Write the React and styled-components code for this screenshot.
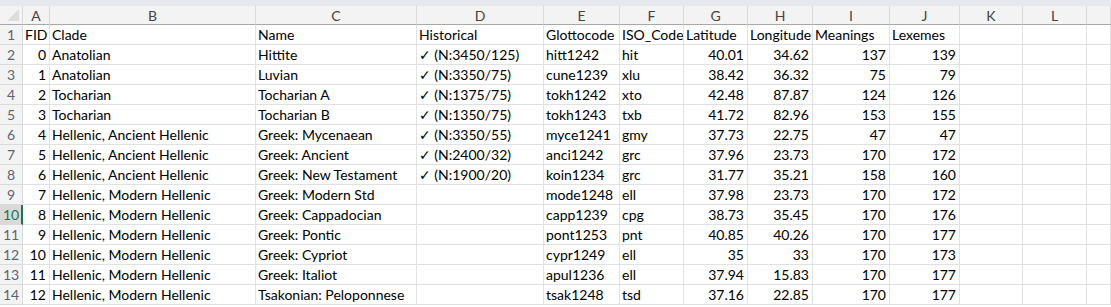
import React from 'react'
import styled, { createGlobalStyle } from 'styled-components'

const GlobalStyle = createGlobalStyle`
  body {
    margin: 0;
    background: #fff;
    font-family: Lato, "Liberation Sans", "DejaVu Sans", sans-serif;
  }
`

const widths = [23, 27, 206, 161, 127, 76, 64, 64, 65, 77, 70, 63, 64]
const letters = ['A', 'B', 'C', 'D', 'E', 'F', 'G', 'H', 'I', 'J', 'K', 'L', '']
// numeric columns are right aligned
const numeric = [true, false, false, false, false, false, true, true, true, true, false, false, false]

const header = ['FID', 'Clade', 'Name', 'Historical', 'Glottocode', 'ISO_Code', 'Latitude', 'Longitude', 'Meanings', 'Lexemes']

const rows = [
  ['0', 'Anatolian', 'Hittite', '✓ (N:3450/125)', 'hitt1242', 'hit', '40.01', '34.62', '137', '139'],
  ['1', 'Anatolian', 'Luvian', '✓ (N:3350/75)', 'cune1239', 'xlu', '38.42', '36.32', '75', '79'],
  ['2', 'Tocharian', 'Tocharian A', '✓ (N:1375/75)', 'tokh1242', 'xto', '42.48', '87.87', '124', '126'],
  ['3', 'Tocharian', 'Tocharian B', '✓ (N:1350/75)', 'tokh1243', 'txb', '41.72', '82.96', '153', '155'],
  ['4', 'Hellenic, Ancient Hellenic', 'Greek: Mycenaean', '✓ (N:3350/55)', 'myce1241', 'gmy', '37.73', '22.75', '47', '47'],
  ['5', 'Hellenic, Ancient Hellenic', 'Greek: Ancient', '✓ (N:2400/32)', 'anci1242', 'grc', '37.96', '23.73', '170', '172'],
  ['6', 'Hellenic, Ancient Hellenic', 'Greek: New Testament', '✓ (N:1900/20)', 'koin1234', 'grc', '31.77', '35.21', '158', '160'],
  ['7', 'Hellenic, Modern Hellenic', 'Greek: Modern Std', '', 'mode1248', 'ell', '37.98', '23.73', '170', '172'],
  ['8', 'Hellenic, Modern Hellenic', 'Greek: Cappadocian', '', 'capp1239', 'cpg', '38.73', '35.45', '170', '176'],
  ['9', 'Hellenic, Modern Hellenic', 'Greek: Pontic', '', 'pont1253', 'pnt', '40.85', '40.26', '170', '177'],
  ['10', 'Hellenic, Modern Hellenic', 'Greek: Cypriot', '', 'cypr1249', 'ell', '35', '33', '170', '173'],
  ['11', 'Hellenic, Modern Hellenic', 'Greek: Italiot', '', 'apul1236', 'ell', '37.94', '15.83', '170', '177'],
  ['12', 'Hellenic, Modern Hellenic', 'Tsakonian: Peloponnese', '', 'tsak1248', 'tsd', '37.16', '22.85', '170', '177'],
]

export default function App() {
  const selectedRow = 10
  return (
    <>
      <GlobalStyle />
      <Sheet>
        <TopStrip />
        <Grid>
          <Corner>
            <CornerTriangle />
          </Corner>
          {letters.map((l, i) => (
            <ColHead key={'h' + i}>{l}</ColHead>
          ))}

          <RowHead>1</RowHead>
          {letters.map((_, i) => (
            <Cell key={'r1' + i}>{header[i] || ''}</Cell>
          ))}

          {rows.map((r, ri) => {
            const n = ri + 2
            return (
              <React.Fragment key={n}>
                <RowHead $selected={n === selectedRow}>{n}</RowHead>
                {letters.map((_, i) => (
                  <Cell key={i} $right={numeric[i]}>
                    {r[i] || ''}
                  </Cell>
                ))}
              </React.Fragment>
            )
          })}
        </Grid>
      </Sheet>
    </>
  )
}

const Sheet = styled.div`
  width: 1111px;
  height: 307px;
  overflow: hidden;
  background: #fff;
`

const TopStrip = styled.div`
  height: 6px;
  background: #e6e8eb;
`

const Grid = styled.div`
  display: grid;
  grid-template-columns: ${widths.map(w => w + 'px').join(' ')} 1fr;
  grid-template-rows: 19px;
  grid-auto-rows: 20px;
`

const Corner = styled.div`
  position: relative;
  background: #f3f3f3;
  border-right: 1px solid #dadada;
  border-bottom: 1px solid #a8a8a8;
`

const CornerTriangle = styled.div`
  position: absolute;
  right: 3px;
  bottom: 3px;
  width: 0;
  height: 0;
  border-left: 12px solid transparent;
  border-bottom: 12px solid #dcdcdc;
`

const ColHead = styled.div`
  background: #f3f3f3;
  border-right: 1px solid #dadada;
  border-bottom: 1px solid #a8a8a8;
  color: #444;
  font-size: 14px;
  line-height: 19px;
  text-align: center;
`

const RowHead = styled.div`
  background: ${p => (p.$selected ? '#d9d9d9' : '#f3f3f3')};
  border-right: ${p => (p.$selected ? '2px solid #217346' : '1px solid #dadada')};
  border-bottom: 1px solid #dadada;
  color: ${p => (p.$selected ? '#217346' : '#5a6570')};
  font-size: 14px;
  line-height: 20px;
  text-align: center;
  padding-left: ${p => (p.$selected ? '1px' : '0')};
`

const Cell = styled.div`
  border-right: 1px solid #e1e1e1;
  border-bottom: 1px solid #e1e1e1;
  color: #000;
  font-size: 14px;
  line-height: 20px;
  padding: 0 3px 0 2px;
  white-space: nowrap;
  overflow: hidden;
  text-align: ${p => (p.$right ? 'right' : 'left')};
`
